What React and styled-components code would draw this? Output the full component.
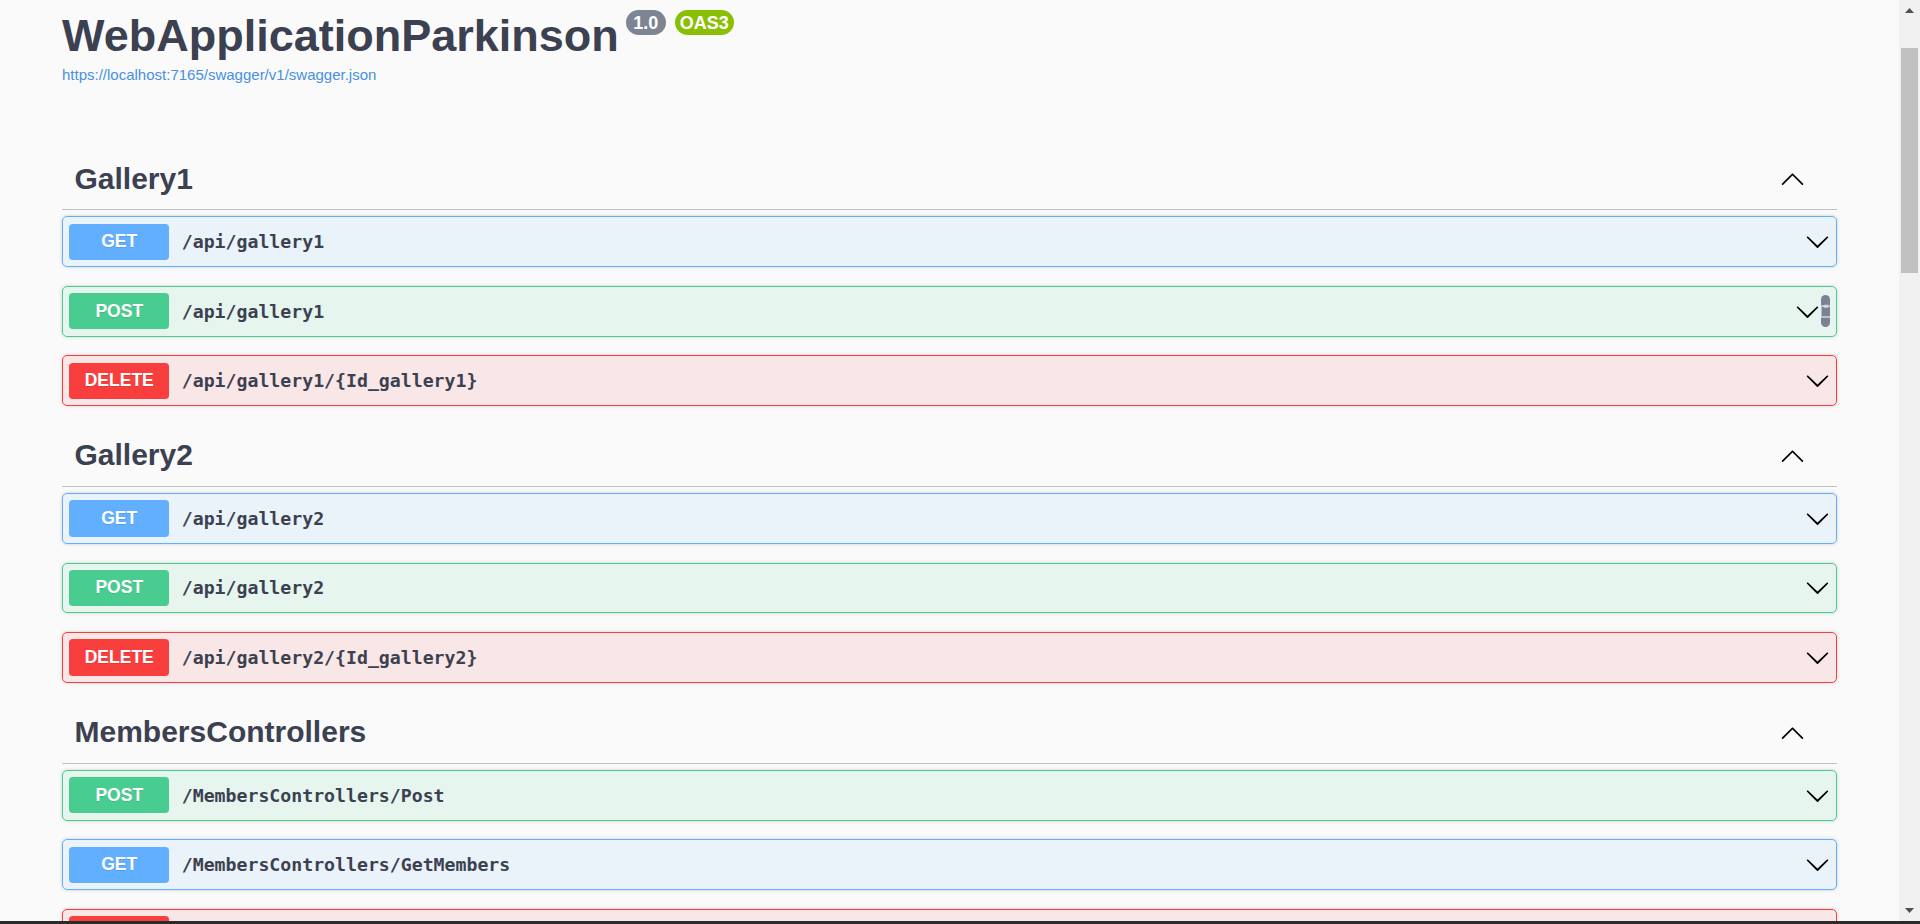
import React from "react";
import styled, { createGlobalStyle } from "styled-components";

const GlobalStyle = createGlobalStyle`
  html, body {
    margin: 0;
    padding: 0;
    height: 100%;
    overflow: hidden;
    background: #fafafa;
  }
  #root {
    height: 100%;
  }
  * {
    box-sizing: border-box;
  }
`;

const methodColors = {
    get: { solid: "#61affe", tint: "rgba(97, 175, 254, 0.1)" },
    post: { solid: "#49cc90", tint: "rgba(73, 204, 144, 0.1)" },
    delete: { solid: "#f93e3e", tint: "rgba(249, 62, 62, 0.1)" },
};

const sections = [
    {
        name: "Gallery1",
        ops: [
            { method: "get", path: "/api/gallery1" },
            { method: "post", path: "/api/gallery1", copy: true },
            { method: "delete", path: "/api/gallery1/{Id_gallery1}" },
        ],
    },
    {
        name: "Gallery2",
        ops: [
            { method: "get", path: "/api/gallery2" },
            { method: "post", path: "/api/gallery2" },
            { method: "delete", path: "/api/gallery2/{Id_gallery2}" },
        ],
    },
    {
        name: "MembersControllers",
        ops: [
            { method: "post", path: "/MembersControllers/Post" },
            { method: "get", path: "/MembersControllers/GetMembers" },
            { method: "delete", path: "/MembersControllers/Delete/{id}" },
        ],
    },
];

// swagger-ui sprite arrows
const ARROW_UP =
    "M17.418 14.908c.272.268.709.268.979 0s.271-.701 0-.969l-7.908-7.83c-.27-.268-.707-.268-.979 0l-7.908 7.83c-.27.268-.27.701 0 .969.271.268.709.268.979 0L10 7.659l7.418 7.249z";
const ARROW_DOWN =
    "M17.418 6.109c.272-.268.709-.268.979 0s.271.701 0 .969l-7.908 7.83c-.27.268-.707.268-.979 0l-7.908-7.83c-.27-.268-.27-.701 0-.969.271-.268.709-.268.979 0L10 13.25l7.418-7.141z";

function Arrow({ d }) {
    return (
        <svg width="25" height="25" viewBox="0 0 20 20" aria-hidden="true">
            <path d={d} fill="#000" />
        </svg>
    );
}

function Operation({ method, path, copy }) {
    return (
        <Opblock $method={method}>
            <Summary>
                <SummaryControl>
                    <Method $method={method}>{method.toUpperCase()}</Method>
                    <Path>{path}</Path>
                </SummaryControl>
                <ArrowButton>
                    <Arrow d={ARROW_DOWN} />
                </ArrowButton>
                {copy && (
                    <CopyPill>
                        <svg width="12" height="14" viewBox="0 0 12 14">
                            <rect x="1" y="2" width="10" height="11" rx="1" fill="none" stroke="#d4d6dc" strokeWidth="1.4" />
                            <rect x="3.5" y="0.8" width="5" height="3" rx="0.8" fill="#d4d6dc" />
                        </svg>
                    </CopyPill>
                )}
            </Summary>
        </Opblock>
    );
}

export default function App() {
    return (
        <>
            <GlobalStyle />
            <Screen>
                <Viewport>
                    <Page>
                        <Wrapper>
                            <Info>
                                <TitleRow>
                                    <Title>WebApplicationParkinson</Title>
                                    <Badge $bg="#7d8492" $gap={7} $px={7.5}>1.0</Badge>
                                    <Badge $bg="#89bf04" $gap={9} $px={5}>OAS3</Badge>
                                </TitleRow>
                                <UrlLink href="#">https://localhost:7165/swagger/v1/swagger.json</UrlLink>
                            </Info>

                            {sections.map((section) => (
                                <TagSection key={section.name}>
                                    <TagHeader>
                                        <TagName>{section.name}</TagName>
                                        <ExpandButton>
                                            <Arrow d={ARROW_UP} />
                                        </ExpandButton>
                                    </TagHeader>
                                    {section.ops.map((op) => (
                                        <Operation key={op.method + op.path} {...op} />
                                    ))}
                                </TagSection>
                            ))}
                        </Wrapper>
                    </Page>
                    <Scrollbar>
                        <ScrollButton>
                            <svg width="9" height="5" viewBox="0 0 9 5">
                                <polygon points="0,5 4.5,0 9,5" fill="#505050" />
                            </svg>
                        </ScrollButton>
                        <Track>
                            <Thumb />
                        </Track>
                        <ScrollButton>
                            <svg width="9" height="5" viewBox="0 0 9 5">
                                <polygon points="0,0 9,0 4.5,5" fill="#505050" />
                            </svg>
                        </ScrollButton>
                    </Scrollbar>
                </Viewport>
                <Taskbar />
            </Screen>
        </>
    );
}

const Screen = styled.div`
    height: 100vh;
    display: flex;
    flex-direction: column;
`;

const Viewport = styled.div`
    flex: 1;
    min-height: 0;
    display: flex;
`;

const Page = styled.main`
    flex: 1;
    min-width: 0;
    overflow: hidden;
    background: #fafafa;
`;

const Wrapper = styled.div`
    max-width: 1825px;
    margin: 0 auto;
    padding: 0 25px;
`;

const Info = styled.div`
    padding-top: 10px;
    margin-bottom: 65px;
`;

const TitleRow = styled.div`
    display: flex;
    align-items: flex-start;
`;

const Title = styled.h2`
    margin: 0;
    font-family: "Liberation Sans", Arial, sans-serif;
    font-size: 45px;
    font-weight: bold;
    line-height: 52px;
    color: #3b4151;
`;

const Badge = styled.small`
    margin-left: ${(p) => p.$gap}px;
    padding: 2.5px ${(p) => p.$px}px;
    border-radius: 71px;
    background: ${(p) => p.$bg};
    color: #fff;
    font-family: "Liberation Sans", Arial, sans-serif;
    font-size: 18px;
    font-weight: bold;
    line-height: 20px;
`;

const UrlLink = styled.a`
    display: block;
    margin-top: 4px;
    font-family: "Liberation Sans", Arial, sans-serif;
    font-size: 15px;
    line-height: 17px;
    color: #4990e2;
    text-decoration: none;
`;

const TagSection = styled.section`
    display: flex;
    flex-direction: column;
`;

const TagHeader = styled.h3`
    display: flex;
    align-items: center;
    margin: 0 0 6.25px;
    padding: 12.5px 25px 12.5px 12.5px;
    border-bottom: 1px solid rgba(59, 65, 81, 0.3);
    font-family: "Liberation Sans", Arial, sans-serif;
    font-size: 30px;
    font-weight: bold;
    line-height: 36px;
    color: #3b4151;
`;

const TagName = styled.span`
    flex: 1;
`;

const ExpandButton = styled.button`
    display: flex;
    border: none;
    background: none;
    padding: 1.25px 7.5px;
`;

const Opblock = styled.div`
    margin: 0 0 18.75px;
    border: 1px solid ${(p) => methodColors[p.$method].solid};
    border-radius: 5px;
    background: ${(p) => methodColors[p.$method].tint};
    box-shadow: 0 0 3.75px rgba(0, 0, 0, 0.19);
`;

const Summary = styled.div`
    display: flex;
    align-items: center;
    padding: 6.25px;
`;

const SummaryControl = styled.div`
    flex: 1;
    display: flex;
    align-items: center;
    min-width: 0;
`;

const Method = styled.span`
    min-width: 100px;
    padding: 7.5px 0;
    border-radius: 3.75px;
    background: ${(p) => methodColors[p.$method].solid};
    color: #fff;
    font-family: "Liberation Sans", Arial, sans-serif;
    font-size: 17.5px;
    font-weight: bold;
    line-height: 21.25px;
    text-align: center;
    text-shadow: 0 1px 0 rgba(0, 0, 0, 0.1);
`;

const Path = styled.span`
    padding: 0 12.5px;
    font-family: "DejaVu Sans Mono", "Liberation Mono", monospace;
    font-size: 18.2px;
    font-weight: 600;
    color: #3b4151;
`;

const ArrowButton = styled.button`
    display: flex;
    border: none;
    background: none;
    padding: 0;
`;

const CopyPill = styled.div`
    width: 9px;
    height: 32.5px;
    margin-left: 0.5px;
    border-radius: 5px;
    background: #7d8293;
    overflow: hidden;
    display: flex;
    align-items: center;
    justify-content: flex-start;

    svg {
        flex-shrink: 0;
        margin-left: -1px;
    }
`;

const Scrollbar = styled.div`
    width: 21px;
    display: flex;
    flex-direction: column;
    background: #f1f1f1;
`;

const ScrollButton = styled.div`
    height: 21px;
    display: flex;
    align-items: center;
    justify-content: center;
`;

const Track = styled.div`
    flex: 1;
    padding: 27px 2px 0;
`;

const Thumb = styled.div`
    height: 225px;
    background: #c1c1c1;
`;

const Taskbar = styled.div`
    height: 3px;
    background: #2b2b2b;
`;
